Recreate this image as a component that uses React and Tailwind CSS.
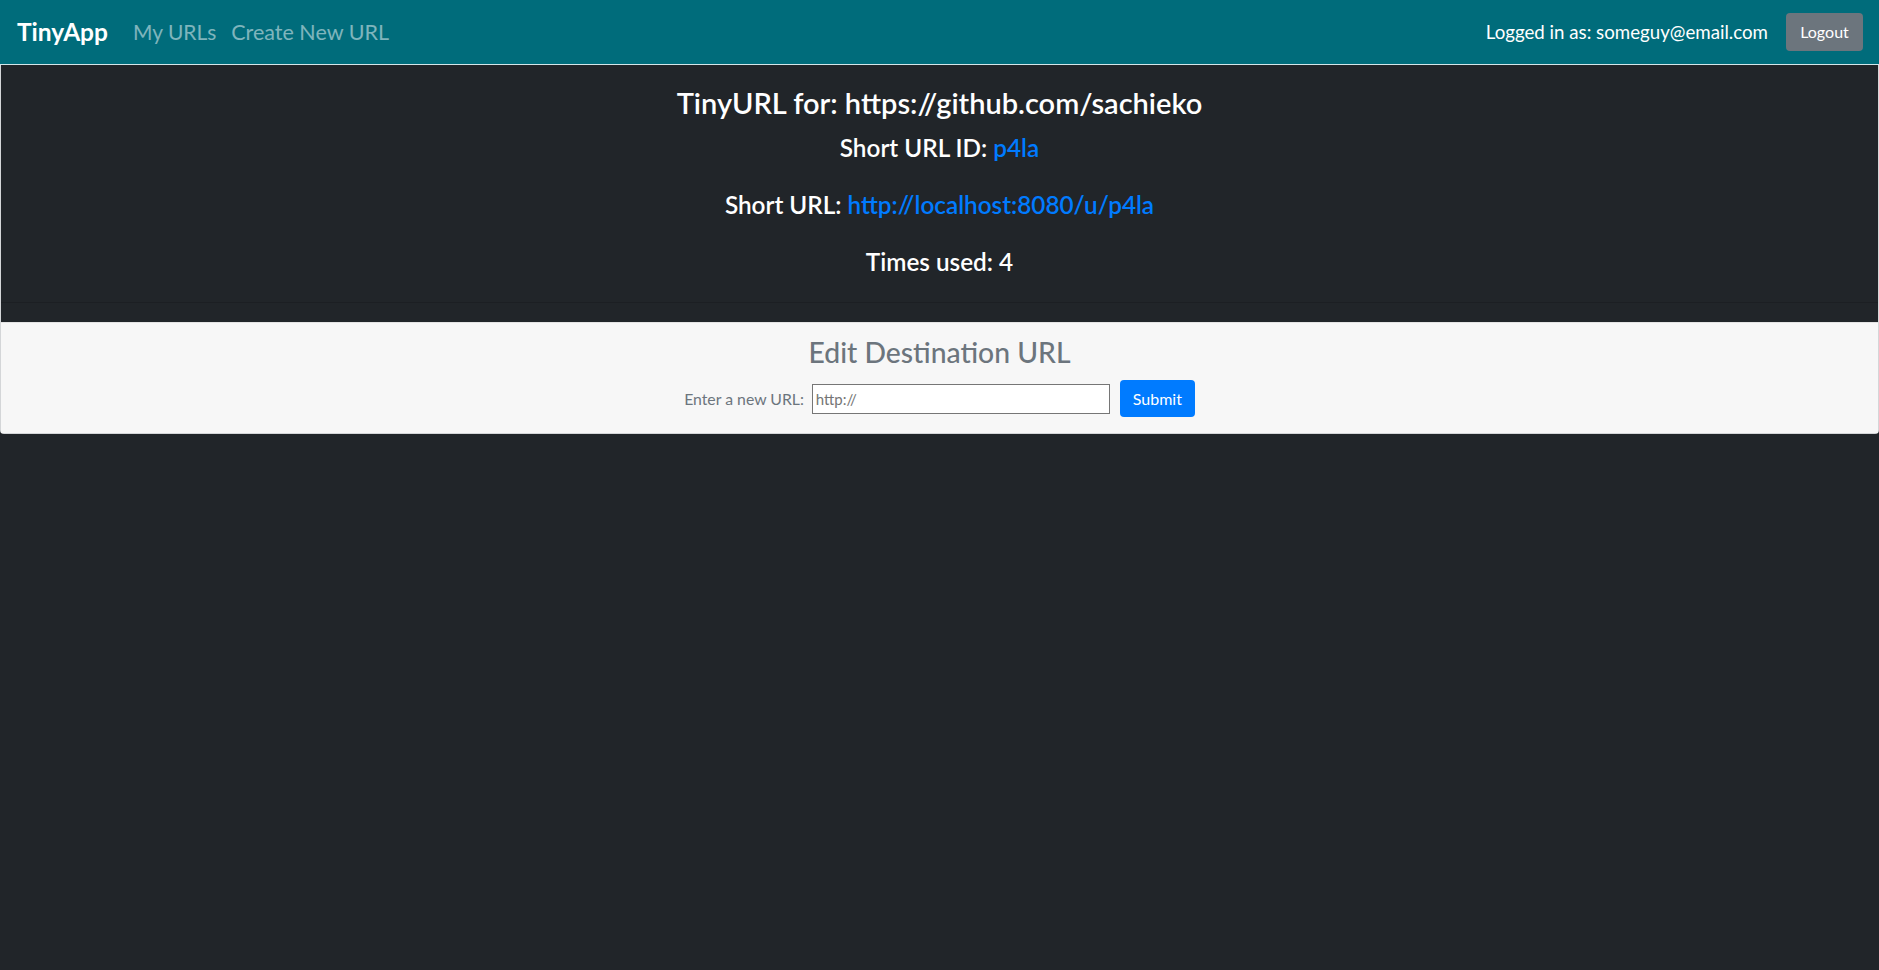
import React from "react";

function NavBar() {
  return (
    <nav className="flex h-[65px] items-center justify-between border-b border-[#d3e6e9] bg-[#006c7b] pl-[17px] pr-4">
      <div className="flex items-center">
        <span className="text-[24.5px] font-bold text-white">TinyApp</span>
        <a className="ml-[25px] text-[21px] text-white/50">My URLs</a>
        <a className="ml-[15px] text-[21.5px] text-white/50">Create New URL</a>
      </div>
      <div className="flex items-center">
        <span className="text-[18.7px] text-white">Logged in as: someguy@email.com</span>
        <button className="ml-[18px] h-[38px] w-[77px] rounded bg-[#6c757d] text-[16px] text-white">
          Logout
        </button>
      </div>
    </nav>
  );
}

export default function App() {
  return (
    <div className="min-h-screen bg-[#212529] font-['Lato','Noto_Sans',sans-serif]">
      <NavBar />
      {/* url card */}
      <div className="rounded-b border-x border-b border-[#d4d6d8]">
        <div className="flex flex-col items-center bg-[#212529] pt-[21px] text-white">
          <h3 className="text-[29px] font-semibold leading-[1.2]">
            TinyURL for: https://github.com/sachieko
          </h3>
          <h4 className="mt-[12px] text-[24.3px] font-semibold leading-[1.2]">
            Short URL ID: <a className="text-[#007bff]">p4la</a>
          </h4>
          <h4 className="mt-[28px] text-[24.3px] font-semibold leading-[1.2]">
            Short URL: <a className="text-[#007bff]">http://localhost:8080/u/p4la</a>
          </h4>
          <h4 className="mt-[28px] text-[24.3px] font-semibold leading-[1.2]">Times used: 4</h4>
          <div className="mt-[26px] h-5 w-full border-t border-[#1c1f23]" />
        </div>
        <div className="flex flex-col items-center border-t border-[#e4e4e4] bg-[#f7f7f7] pb-[16px] pt-[13px]">
          <h4 className="text-[28.3px] font-medium leading-[1.2] text-[#6c757d]">Edit Destination URL</h4>
          <form className="mt-[10px] flex items-center">
            <label className="text-[15.8px] text-[#6c757d]">Enter a new URL:</label>
            <input
              type="text"
              placeholder="http://"
              className="ml-[8px] h-[30px] w-[298px] border border-[#767676] bg-white px-[3px] text-[15px] placeholder:text-[#757575]"
            />
            <button
              type="button"
              className="ml-[10px] h-[37px] w-[75px] rounded bg-[#007bff] text-[16px] text-white"
            >
              Submit
            </button>
          </form>
        </div>
      </div>
    </div>
  );
}
